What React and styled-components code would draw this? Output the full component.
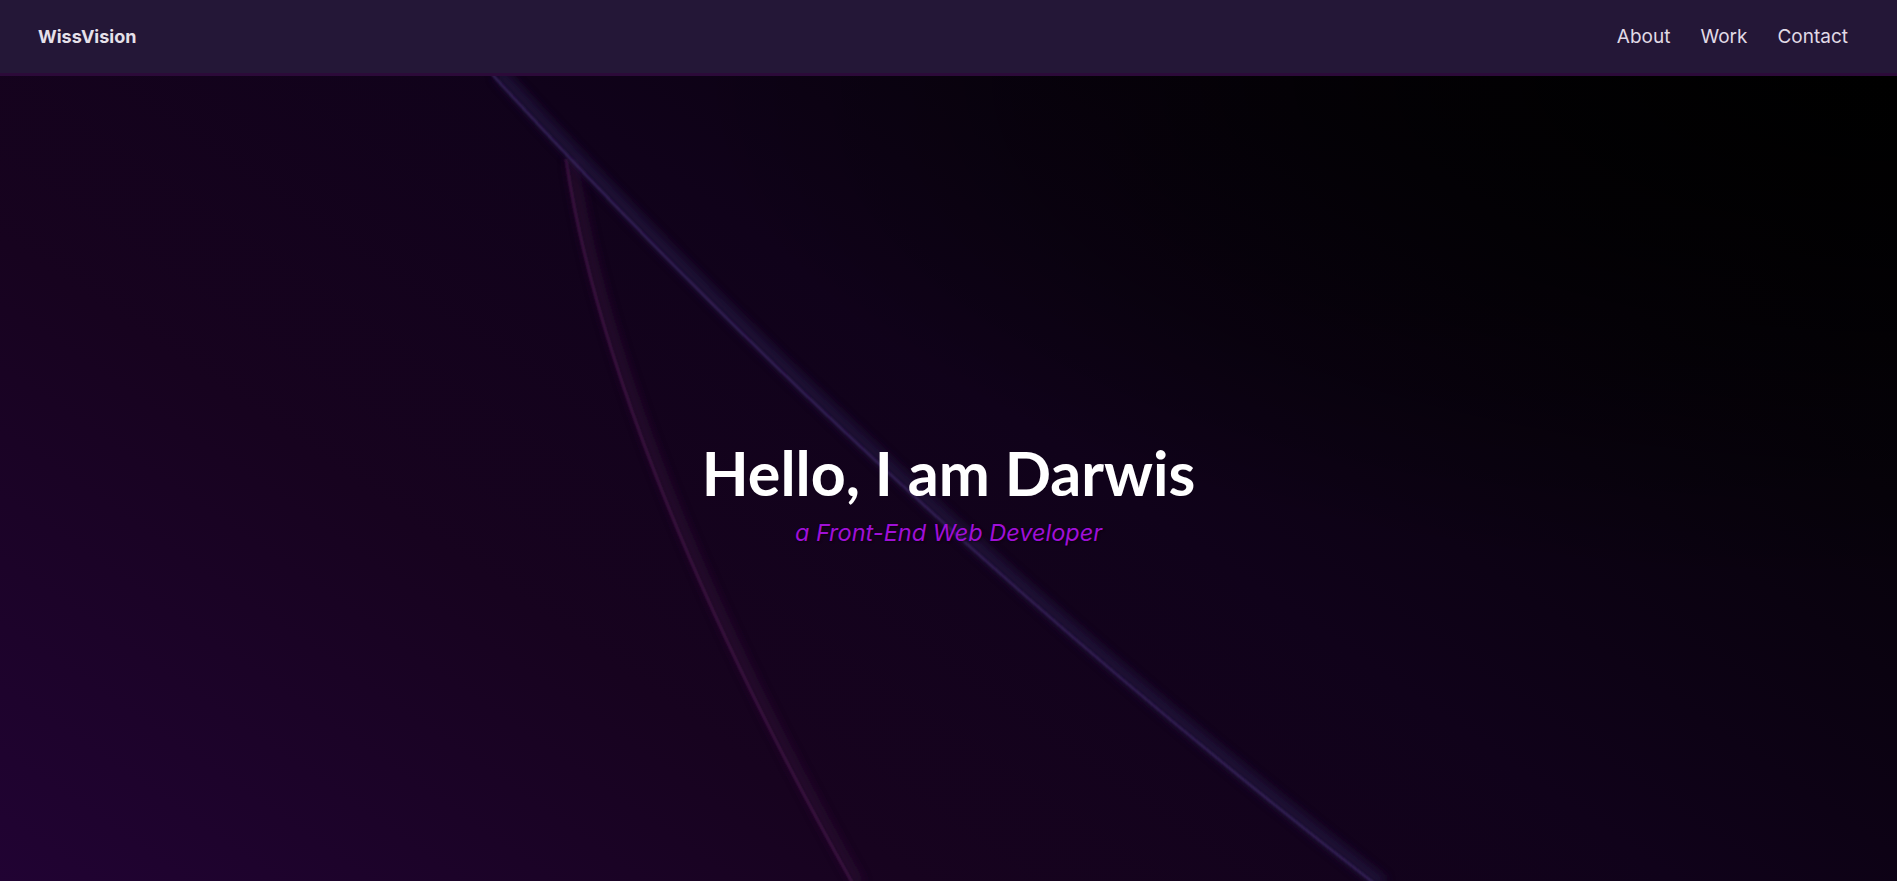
import styled, { createGlobalStyle } from "styled-components"

const GlobalStyle = createGlobalStyle`
  * { box-sizing: border-box; }
  html, body, #root { margin: 0; padding: 0; height: 100%; }
  body {
    background: #0b0210;
    font-family: "Inter", "Noto Sans", sans-serif;
    overflow: hidden;
  }
`

export default function App() {
  return (
    <Page>
      <GlobalStyle />
      <Header>
        <Brand href="#">WissVision</Brand>
        <Nav>
          <NavLink href="#about">About</NavLink>
          <NavLink href="#work">Work</NavLink>
          <NavLink href="#contact">Contact</NavLink>
        </Nav>
      </Header>

      <Hero>
        {/* decorative folds of the wallpaper */}
        <Backdrop viewBox="0 0 1897 805" preserveAspectRatio="none">
          <defs>
            <filter id="glow" x="-20%" y="-20%" width="140%" height="140%">
              <feGaussianBlur stdDeviation="5" />
            </filter>
            <filter id="soft" x="-20%" y="-20%" width="140%" height="140%">
              <feGaussianBlur stdDeviation="0.8" />
            </filter>
          </defs>
          {/* pink fold */}
          <path d="M572 83 C 597 254 687 504 859 808" stroke="#2c0c32" strokeWidth="12" fill="none" filter="url(#glow)" opacity="0.7" />
          <path d="M566 83 C 591 254 681 504 853 808" stroke="#411845" strokeWidth="2.2" fill="none" filter="url(#soft)" />
          {/* violet diagonal */}
          <path d="M498 -4 Q 888 424 1383 808" stroke="#231640" strokeWidth="14" fill="none" filter="url(#glow)" opacity="0.7" />
          <path d="M490 -4 Q 880 424 1375 808" stroke="#3a2860" strokeWidth="2" fill="none" filter="url(#soft)" />
        </Backdrop>

        <Intro>
          <Title>Hello, I am Darwis</Title>
          <Subtitle>a Front-End Web Developer</Subtitle>
        </Intro>
      </Hero>
    </Page>
  )
}

const Page = styled.div`
  display: flex;
  flex-direction: column;
  height: 100vh;
`
const Header = styled.header`
  flex: 0 0 76px;
  display: flex;
  align-items: center;
  justify-content: space-between;
  padding: 0 49px 1px 38px;
  background: #241737;
  border-bottom: 3px solid #2c0a39;
`
const Brand = styled.a`
  font-size: 18px;
  font-weight: 700;
  color: #e6e1ea;
  text-decoration: none;
`
const Nav = styled.nav`
  display: flex;
  gap: 30px;
`
const NavLink = styled.a`
  font-size: 19px;
  color: #e0dae6;
  text-decoration: none;
`
const Hero = styled.main`
  position: relative;
  flex: 1;
  display: flex;
  align-items: center;
  justify-content: center;
  overflow: hidden;
  background:
    radial-gradient(ellipse at 100% 0%, #000000 0%, rgba(0,0,0,0) 45%),
    linear-gradient(35deg, #210333 0%, #17031f 30%, #10021a 55%, #07020b 80%, #020103 100%);
`
const Backdrop = styled.svg`
  position: absolute;
  inset: 0;
  width: 100%;
  height: 100%;
  pointer-events: none;
`
const Intro = styled.div`
  position: relative;
  display: flex;
  flex-direction: column;
  align-items: center;
  margin-top: 26px;
`
const Title = styled.h1`
  margin: 0;
  font-family: "Lato", "Noto Sans", sans-serif;
  font-size: 61px;
  font-weight: 700;
  color: #ffffff;
  line-height: 1.2;
`
const Subtitle = styled.p`
  margin: 8px 0 0;
  font-size: 23.5px;
  font-style: italic;
  color: #a010d8;
  text-shadow: 1px 1px 2px rgba(0, 0, 0, 0.5);
`
